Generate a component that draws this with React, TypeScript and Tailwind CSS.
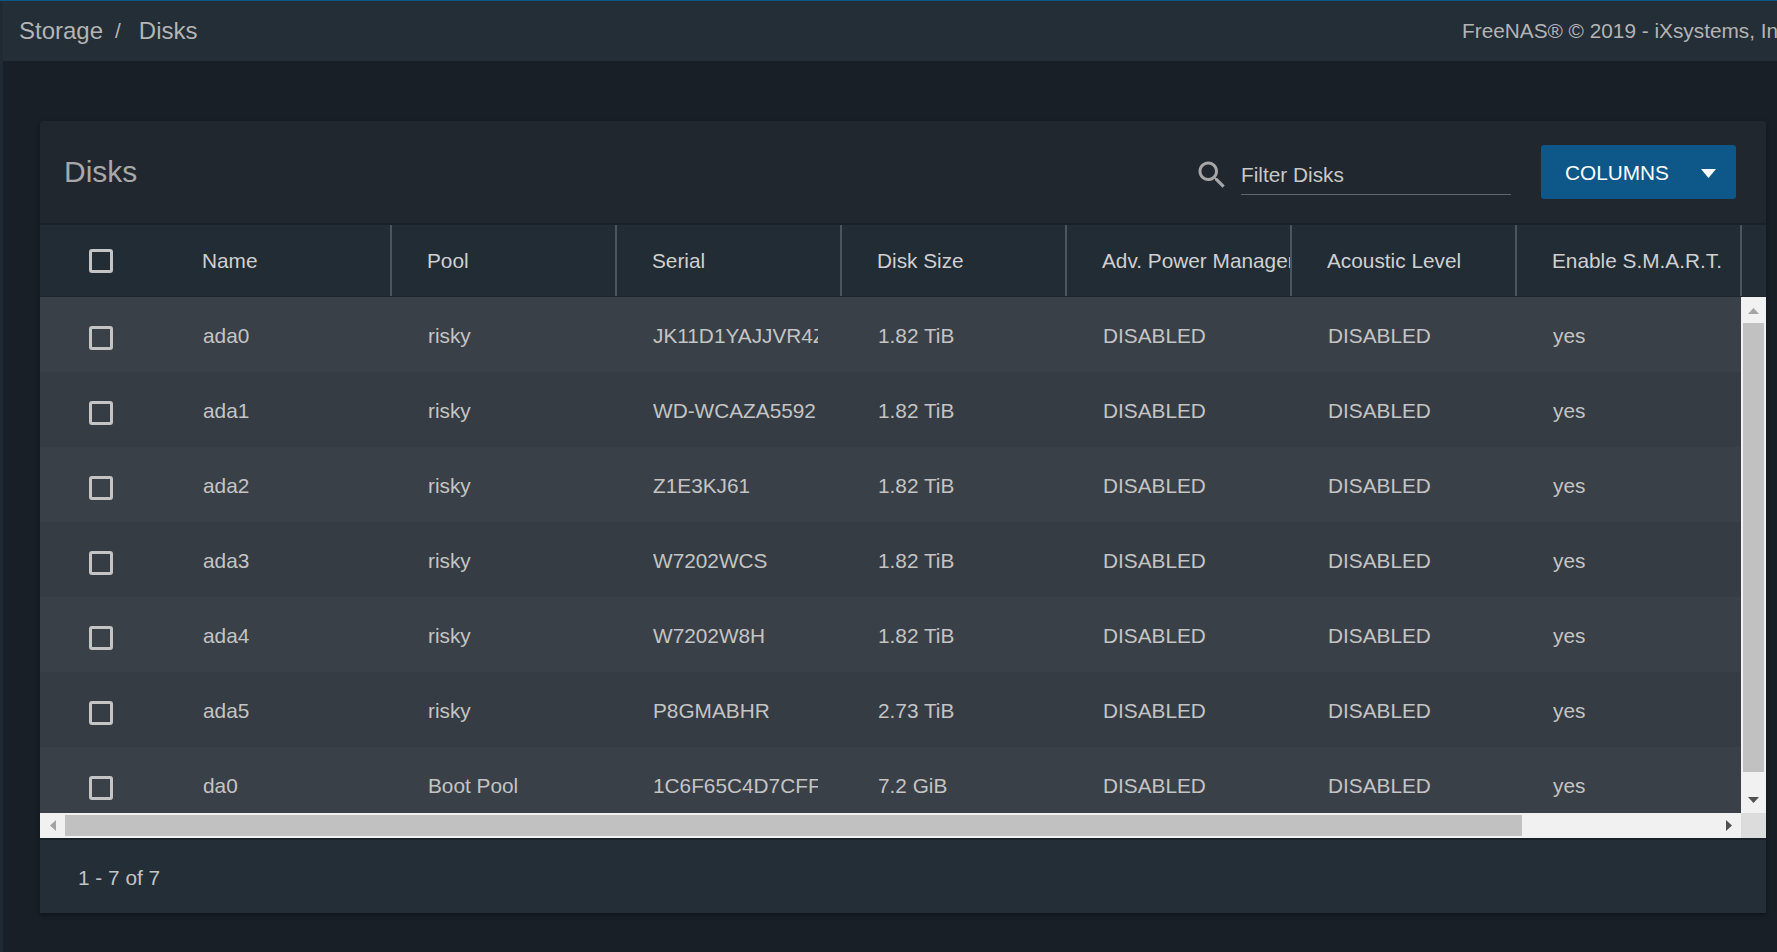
const columns = ["Name", "Pool", "Serial", "Disk Size", "Adv. Power Management", "Acoustic Level", "Enable S.M.A.R.T."];

const disks = [
  { name: "ada0", pool: "risky", serial: "JK11D1YAJJVR4Z", size: "1.82 TiB" },
  { name: "ada1", pool: "risky", serial: "WD-WCAZA5592", size: "1.82 TiB" },
  { name: "ada2", pool: "risky", serial: "Z1E3KJ61", size: "1.82 TiB" },
  { name: "ada3", pool: "risky", serial: "W7202WCS", size: "1.82 TiB" },
  { name: "ada4", pool: "risky", serial: "W7202W8H", size: "1.82 TiB" },
  { name: "ada5", pool: "risky", serial: "P8GMABHR", size: "2.73 TiB" },
  { name: "da0", pool: "Boot Pool", serial: "1C6F65C4D7CFF8", size: "7.2 GiB" },
];

const Checkbox = () => <div className="h-6 w-6 rounded-[3px] border-[3px] border-[#c4c4c4]" />;

const Cell = ({ children }: { children: string }) => (
  <div className="w-[225px] shrink-0 pl-[37px]">
    <div className="w-[165px] overflow-hidden whitespace-nowrap">{children}</div>
  </div>
);

const Row = ({ values, striped }: { values: string[]; striped: boolean }) => (
  <div className={`flex h-[75px] shrink-0 items-center pt-[2px] ${striped ? "bg-[#353c43]" : "bg-[#3a4047]"}`}>
    <div className="mt-[5px] flex w-[126px] shrink-0 pl-[49px]">
      <Checkbox />
    </div>
    {values.map((value, i) => (
      <Cell key={i}>{value}</Cell>
    ))}
  </div>
);

const ArrowUp = ({ color }: { color: string }) => (
  <svg width="11" height="6" viewBox="0 0 11 6">
    <path d="M5.5 0L11 6H0z" fill={color} />
  </svg>
);

const ArrowDown = ({ color }: { color: string }) => (
  <svg width="11" height="6" viewBox="0 0 11 6">
    <path d="M0 0H11L5.5 6z" fill={color} />
  </svg>
);

const ArrowLeft = ({ color }: { color: string }) => (
  <svg width="6" height="11" viewBox="0 0 6 11">
    <path d="M6 0V11L0 5.5z" fill={color} />
  </svg>
);

const ArrowRight = ({ color }: { color: string }) => (
  <svg width="6" height="11" viewBox="0 0 6 11">
    <path d="M0 0L6 5.5L0 11z" fill={color} />
  </svg>
);

const App = () => {
  return (
    <div className="flex h-[952px] w-full flex-col overflow-hidden bg-[#181f27] font-['Liberation_Sans',Arial,sans-serif] text-[20.8px] text-[#c4c4c4]">
      <div className="h-px shrink-0 bg-[#0d5789]" />

      <div className="flex min-h-0 flex-1">
        <div className="w-[3px] shrink-0 bg-[#1f2a32]" />

        <div className="flex min-w-0 flex-1 flex-col">
          {/* Top bar */}
          <div className="flex h-[60px] shrink-0 items-center overflow-hidden bg-[#232e37] pl-[16px] text-[#b4b4b4]">
            <span className="text-[24px]">Storage</span>
            <span className="ml-[12px]">/</span>
            <span className="ml-[18px] text-[24px]">Disks</span>
            <span className="ml-auto w-[315px] shrink-0 whitespace-nowrap">FreeNAS® © 2019 - iXsystems, Inc.</span>
          </div>

          <div className="flex-1 pl-[37px] pr-[11px] pt-[60px]">
            {/* Card */}
            <div className="flex h-[792px] flex-col rounded-t-[3px] bg-[#20272f] shadow-[0_2px_4px_rgba(0,0,0,0.35)]">
              <div className="flex h-[102px] shrink-0 items-center pl-[24px] pr-[30px]">
                <span className="mb-[2px] text-[30px] text-[#a8a8a8]">Disks</span>
                <div className="ml-auto flex items-center">
                  <svg width="36" height="36" viewBox="0 0 24 24" fill="#a6a6a6" className="mt-[5px]">
                    <path d="M15.5 14h-.79l-.28-.27C15.41 12.59 16 11.11 16 9.5 16 5.91 13.09 3 9.5 3S3 5.91 3 9.5 5.91 16 9.5 16c1.61 0 3.09-.59 4.23-1.57l.27.28v.79l5 4.99L20.49 19l-4.99-5zm-6 0C7.01 14 5 11.99 5 9.5S7.01 5 9.5 5 14 7.01 14 9.5 11.99 14 9.5 14z" />
                  </svg>
                  <div className="ml-[11px] mt-[6px] h-[39px] w-[270px] border-b border-[#5f666d] pt-[3px] text-[#c8c8c8]">
                    Filter Disks
                  </div>
                  <button className="ml-[30px] flex h-[54px] w-[195px] items-center rounded-[3px] bg-[#0d5789] pl-[24px] pt-[2px] text-white">
                    COLUMNS
                    <svg width="15" height="9" viewBox="0 0 15 9" className="ml-[32px]">
                      <path d="M0 0H15L7.5 9z" fill="#ffffff" />
                    </svg>
                  </button>
                </div>
              </div>

              <div className="h-[2px] shrink-0 bg-[#1a2128]" />

              {/* Table header */}
              <div className="flex h-[71px] shrink-0 items-center bg-[#222c35] text-[#d0d0d0]">
                <div className="flex w-[127px] shrink-0 pl-[49px]">
                  <Checkbox />
                </div>
                {columns.map((column) => (
                  <div
                    key={column}
                    className="flex h-full w-[225px] shrink-0 items-center overflow-hidden whitespace-nowrap border-r-2 border-[#4b555d] pl-[35px] pt-[1px]"
                  >
                    {column}
                  </div>
                ))}
              </div>

              <div className="h-px shrink-0 bg-[#1c252c]" />

              {/* Rows and vertical scrollbar */}
              <div className="flex h-[516px] shrink-0">
                <div className="flex w-[1701px] shrink-0 flex-col overflow-hidden">
                  {disks.map((disk, i) => (
                    <Row
                      key={disk.name}
                      striped={i % 2 === 1}
                      values={[disk.name, disk.pool, disk.serial, disk.size, "DISABLED", "DISABLED", "yes"]}
                    />
                  ))}
                </div>
                <div className="flex w-[25px] shrink-0 flex-col items-center bg-[#f1f1f1]">
                  <div className="flex h-[26px] shrink-0 items-center justify-center pt-[2px]">
                    <ArrowUp color="#a3a3a3" />
                  </div>
                  <div className="h-[449px] w-[21px] shrink-0 bg-[#c1c1c1]" />
                  <div className="flex flex-1 items-end justify-center pb-[10px]">
                    <ArrowDown color="#505050" />
                  </div>
                </div>
              </div>

              {/* Horizontal scrollbar */}
              <div className="flex h-[25px] shrink-0 bg-[#f1f1f1]">
                <div className="flex w-[25px] shrink-0 items-center justify-center">
                  <ArrowLeft color="#a3a3a3" />
                </div>
                <div className="my-[2px] w-[1457px] shrink-0 bg-[#c1c1c1]" />
                <div className="flex flex-1 items-center justify-end pr-[9px]">
                  <ArrowRight color="#505050" />
                </div>
                <div className="w-[25px] shrink-0 bg-[#dcdcdc]" />
              </div>

              <div className="h-[2px] shrink-0 bg-[#1a2128]" />

              {/* Footer */}
              <div className="flex flex-1 items-center bg-[#232e37] pl-[38px] pt-[2px]">1 - 7 of 7</div>
            </div>
          </div>
        </div>
      </div>
    </div>
  );
};

export default App;
